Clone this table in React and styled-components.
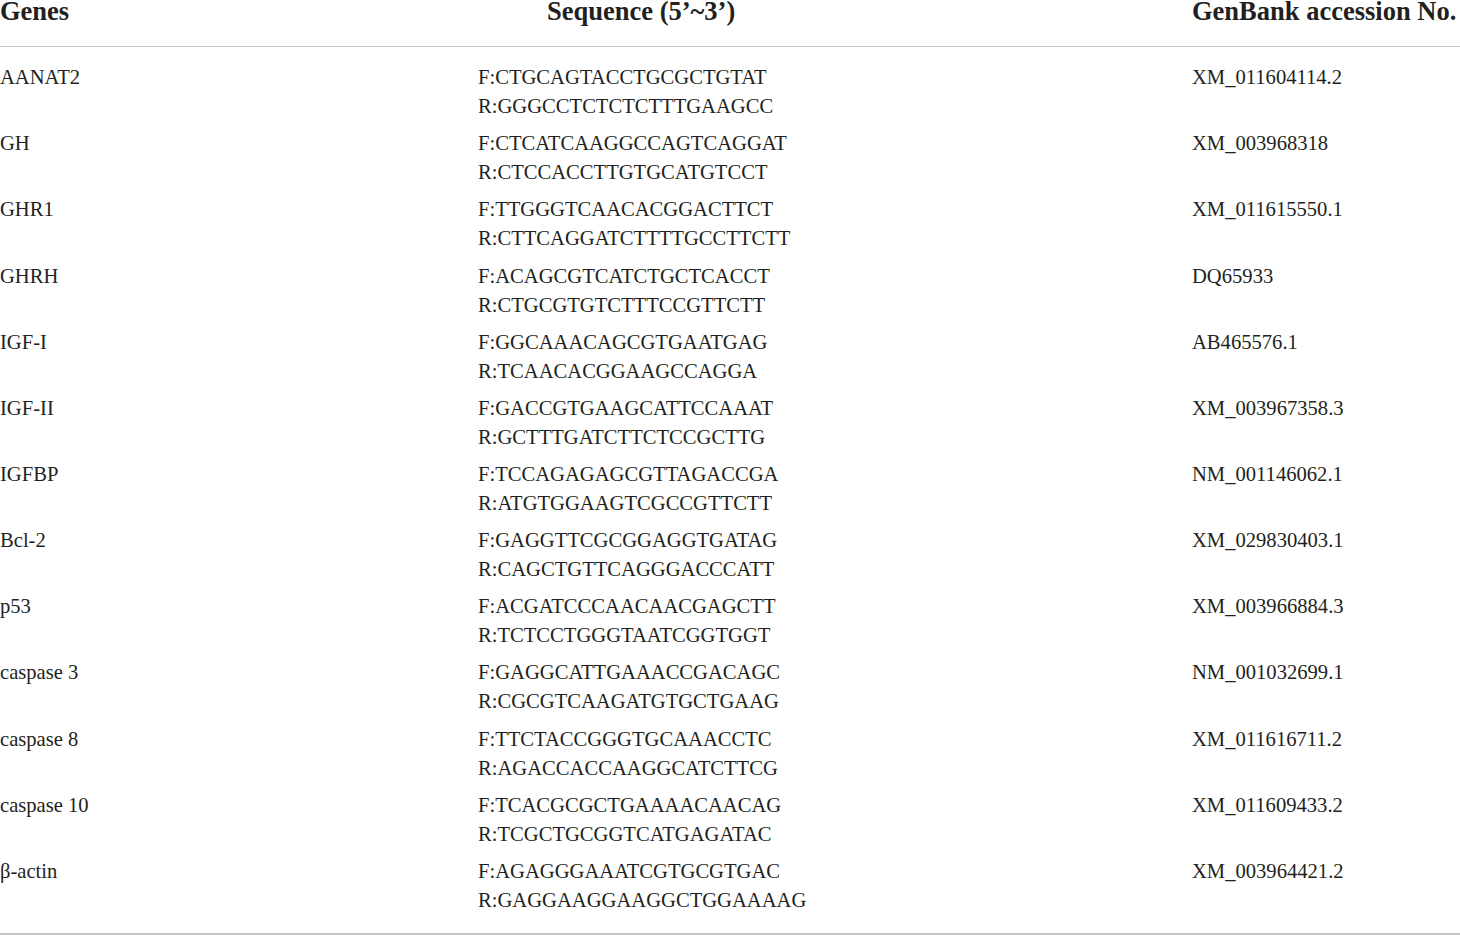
import React from 'react';
import styled, { createGlobalStyle } from 'styled-components';

const rows = [
  ['AANAT2', 'F:CTGCAGTACCTGCGCTGTAT', 'R:GGGCCTCTCTCTTTGAAGCC', 'XM_011604114.2'],
  ['GH', 'F:CTCATCAAGGCCAGTCAGGAT', 'R:CTCCACCTTGTGCATGTCCT', 'XM_003968318'],
  ['GHR1', 'F:TTGGGTCAACACGGACTTCT', 'R:CTTCAGGATCTTTTGCCTTCTT', 'XM_011615550.1'],
  ['GHRH', 'F:ACAGCGTCATCTGCTCACCT', 'R:CTGCGTGTCTTTCCGTTCTT', 'DQ65933'],
  ['IGF-I', 'F:GGCAAACAGCGTGAATGAG', 'R:TCAACACGGAAGCCAGGA', 'AB465576.1'],
  ['IGF-II', 'F:GACCGTGAAGCATTCCAAAT', 'R:GCTTTGATCTTCTCCGCTTG', 'XM_003967358.3'],
  ['IGFBP', 'F:TCCAGAGAGCGTTAGACCGA', 'R:ATGTGGAAGTCGCCGTTCTT', 'NM_001146062.1'],
  ['Bcl-2', 'F:GAGGTTCGCGGAGGTGATAG', 'R:CAGCTGTTCAGGGACCCATT', 'XM_029830403.1'],
  ['p53', 'F:ACGATCCCAACAACGAGCTT', 'R:TCTCCTGGGTAATCGGTGGT', 'XM_003966884.3'],
  ['caspase 3', 'F:GAGGCATTGAAACCGACAGC', 'R:CGCGTCAAGATGTGCTGAAG', 'NM_001032699.1'],
  ['caspase 8', 'F:TTCTACCGGGTGCAAACCTC', 'R:AGACCACCAAGGCATCTTCG', 'XM_011616711.2'],
  ['caspase 10', 'F:TCACGCGCTGAAAACAACAG', 'R:TCGCTGCGGTCATGAGATAC', 'XM_011609433.2'],
  ['β-actin', 'F:AGAGGGAAATCGTGCGTGAC', 'R:GAGGAAGGAAGGCTGGAAAAG', 'XM_003964421.2'],
];

const GlobalStyle = createGlobalStyle`
  body {
    margin: 0;
    background: #ffffff;
    font-family: "Liberation Serif", "Times New Roman", serif;
    color: #231f20;
  }
`;

const Table = styled.div`
  width: 1460px;
  display: flex;
  flex-direction: column;
`;

const HeadRow = styled.div`
  display: grid;
  grid-template-columns: 478px 714px 1fr;
  padding-bottom: 24px;
  border-bottom: 1px solid #c6c6c6;
  margin-bottom: 12px;
`;

const HeadCell = styled.div`
  font-size: 26.5px;
  font-weight: bold;
  line-height: 22px;
  white-space: nowrap;
  padding-left: ${p => p.$indent || 0}px;
`;

const Body = styled.div`
  display: flex;
  flex-direction: column;
  padding-bottom: 14px;
  border-bottom: 2px solid #c6c6c6;
`;

const Row = styled.div`
  display: grid;
  grid-template-columns: 478px 714px 1fr;
  padding: 4.08px 0;
  font-size: 20.6px;
  line-height: 29px;
`;

const Cell = styled.div`
  white-space: nowrap;
`;

const Primer = styled.div`
  white-space: nowrap;
`;

export default function App() {
  return (
    <>
      <GlobalStyle />
      <Table>
        <HeadRow>
          <HeadCell>Genes</HeadCell>
          <HeadCell $indent={69}>Sequence (5’~3’)</HeadCell>
          <HeadCell>GenBank accession No.</HeadCell>
        </HeadRow>
        <Body>
          {rows.map(([gene, fwd, rev, acc]) => (
            <Row key={gene}>
              <Cell>{gene}</Cell>
              <Cell>
                <Primer>{fwd}</Primer>
                <Primer>{rev}</Primer>
              </Cell>
              <Cell>{acc}</Cell>
            </Row>
          ))}
        </Body>
      </Table>
    </>
  );
}
